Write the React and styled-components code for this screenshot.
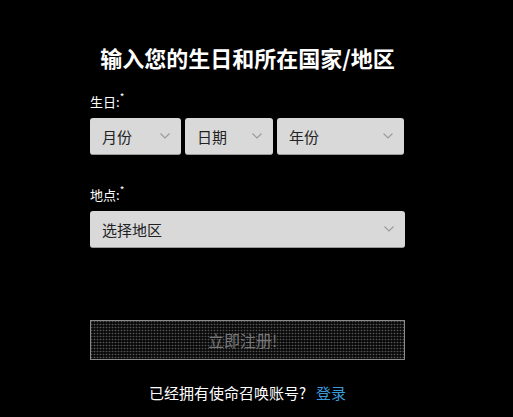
import React from "react";
import styled, { createGlobalStyle } from "styled-components";

const GlobalStyle = createGlobalStyle`
  body {
    margin: 0;
    background: #000;
    font-family: "Noto Sans CJK SC", "Noto Sans", sans-serif;
  }
`;

const Chevron = () => (
  <svg width="12" height="8" viewBox="0 0 12 8">
    <path d="M1.5 1.5 L6 6 L10.5 1.5" fill="none" stroke="#999" strokeWidth="1.1" />
  </svg>
);

export default function App() {
  return (
    <>
      <GlobalStyle />
      <Page>
        <Form>
          <Title>输入您的生日和所在国家/地区</Title>
          <Label>
            生日:<Star>*</Star>
          </Label>
          <DateRow>
            <Select>
              <span>月份</span>
              <Chevron />
            </Select>
            <Select>
              <span>日期</span>
              <Chevron />
            </Select>
            <Select>
              <span>年份</span>
              <Chevron />
            </Select>
          </DateRow>
          <Label $top={31}>
            地点:<Star>*</Star>
          </Label>
          <Select>
            <span>选择地区</span>
            <Chevron />
          </Select>
          <Submit disabled>立即注册!</Submit>
          <Footer>
            已经拥有使命召唤账号?<Login href="#">登录</Login>
          </Footer>
        </Form>
      </Page>
    </>
  );
}

const Page = styled.div`
  min-height: 417px;
  padding-top: 42px;
  box-sizing: border-box;
`;

const Form = styled.div`
  width: 315px;
  margin-left: 90px;
  display: flex;
  flex-direction: column;
`;

const Title = styled.h1`
  margin: 0;
  font-size: 22px;
  line-height: 30px;
  font-weight: 700;
  color: #fff;
  text-align: center;
  white-space: nowrap;
`;

const Label = styled.div`
  margin-top: ${(p) => p.$top || 21}px;
  font-size: 13px;
  line-height: 18px;
  color: #fff;
`;

const Star = styled.sup`
  font-size: 10px;
  line-height: 0;
  vertical-align: 6px;
`;

const DateRow = styled.div`
  display: grid;
  grid-template-columns: 91px 88px 1fr;
  gap: 4px;
  margin-right: 1px;
`;

const Select = styled.div`
  margin-top: 7px;
  height: 37px;
  box-sizing: border-box;
  display: flex;
  align-items: center;
  justify-content: space-between;
  padding: 0 10px 0 12px;
  background: #d9d9d9;
  border-radius: 3px;
  border-bottom: 1px solid #9a9a9a;
  font-size: 15px;
  color: #222;
`;

const Submit = styled.button`
  margin-top: 72px;
  height: 40px;
  border: 1px solid #8a8a8a;
  border-radius: 0;
  background-color: #1a1a1a;
  background-image: linear-gradient(90deg, transparent 1px, rgba(0, 0, 0, 0.6) 1px),
    linear-gradient(180deg, #555 1px, #1a1a1a 1px);
  background-size: 3px 3px;
  color: #777;
  font-family: inherit;
  font-size: 16px;
  padding: 0 10px 0 0;
`;

const Footer = styled.div`
  margin-top: 23px;
  text-align: center;
  font-size: 15px;
  line-height: 20px;
  color: #fff;
`;

const Login = styled.a`
  margin-left: 10px;
  color: #3a9ad9;
  text-decoration: none;
`;
